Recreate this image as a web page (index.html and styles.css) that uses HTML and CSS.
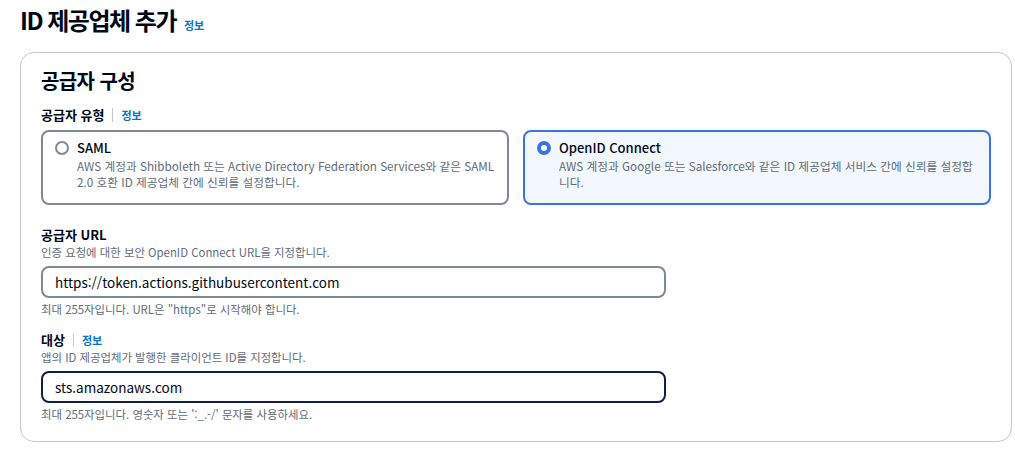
FILE: index.html
```html
<!DOCTYPE html>
<html lang="ko">
<head>
<meta charset="utf-8">
<link rel="stylesheet" href="styles.css">
</head>
<body>
<div class="page">
  <header class="page-header">
    <h1 class="page-title">ID 제공업체 추가</h1>
    <a class="info-link info-link--title">정보</a>
  </header>

  <section class="container">
    <h2 class="container-title">공급자 구성</h2>

    <div class="field">
      <div class="field-label-row">
        <span class="field-label">공급자 유형</span>
        <span class="divider"></span>
        <a class="info-link">정보</a>
      </div>
      <div class="tiles">
        <div class="tile">
          <span class="radio"></span>
          <div class="tile-text">
            <div class="tile-title">SAML</div>
            <div class="tile-desc">AWS 계정과 Shibboleth 또는 Active Directory Federation Services와 같은 SAML 2.0 호환 ID 제공업체 간에 신뢰를 설정합니다.</div>
          </div>
        </div>
        <div class="tile tile--selected">
          <span class="radio radio--checked"></span>
          <div class="tile-text">
            <div class="tile-title">OpenID Connect</div>
            <div class="tile-desc">AWS 계정과 Google 또는 Salesforce와 같은 ID 제공업체 서비스 간에 신뢰를 설정합니다.</div>
          </div>
        </div>
      </div>
    </div>

    <div class="field field--input">
      <div class="field-label-row">
        <span class="field-label">공급자 URL</span>
      </div>
      <div class="field-desc">인증 요청에 대한 보안 OpenID Connect URL을 지정합니다.</div>
      <div class="input">https://token.actions.githubusercontent.com</div>
      <div class="field-hint">최대 255자입니다. URL은 "https"로 시작해야 합니다.</div>
    </div>

    <div class="field field--input field--last">
      <div class="field-label-row">
        <span class="field-label">대상</span>
        <span class="divider"></span>
        <a class="info-link">정보</a>
      </div>
      <div class="field-desc">앱의 ID 제공업체가 발행한 클라이언트 ID를 지정합니다.</div>
      <div class="input input--focused">sts.amazonaws.com</div>
      <div class="field-hint">최대 255자입니다. 영숫자 또는 ':_.-/' 문자를 사용하세요.</div>
    </div>
  </section>
</div>
</body>
</html>
```

FILE: styles.css
```css
* { box-sizing: border-box; }
html, body {
  margin: 0;
  padding: 0;
  background: #ffffff;
}
body {
  font-family: "Noto Sans CJK KR", "Noto Sans", sans-serif;
  color: #000716;
}
.page {
  padding: 0 4px 0 20px;
}
.page-header {
  display: flex;
  align-items: baseline;
  gap: 8px;
  height: 52px;
  padding-top: 4px;
}
.page-title {
  margin: 0;
  font-size: 24px;
  line-height: 32px;
  font-weight: 700;
  letter-spacing: -1.5px;
}
.info-link {
  color: #0972d3;
  font-size: 11px;
  font-weight: 700;
  text-decoration: none;
}
.container {
  border: 1px solid #c6c6cd;
  border-radius: 14px;
  padding: 14px 20px 19px 20px;
  width: 992px;
}
.container-title {
  margin: 0;
  font-size: 20px;
  line-height: 28px;
  font-weight: 700;
  letter-spacing: -0.6px;
}
.field { margin-top: 11px; }
.field--input { margin-top: 21px; }
.field--last { margin-top: 14px; }
.field-label-row {
  display: flex;
  align-items: center;
  height: 18px;
}
.field-label {
  font-size: 13px;
  font-weight: 700;
  line-height: 18px;
}
.divider {
  width: 1px;
  height: 14px;
  background: #c6c6cd;
  margin: 0 8px;
}
.tiles {
  display: grid;
  grid-template-columns: 1fr 1fr;
  gap: 14px;
  margin-top: 6px;
  width: 950px;
}
.tile {
  display: flex;
  align-items: flex-start;
  gap: 8px;
  border: 2px solid #7d8998;
  border-radius: 8px;
  padding: 6px 12px 12px 12px;
  height: 75px;
}
.tile--selected {
  border-color: #3b74e0;
  background: #f2f8fd;
}
.radio {
  flex: none;
  width: 14px;
  height: 14px;
  border: 2px solid #7d8998;
  border-radius: 50%;
  margin-top: 3px;
  background: #fff;
}
.radio--checked {
  border: 4px solid #3b74e0;
  background: #fff;
}
.tile-title {
  font-size: 13px;
  line-height: 20px;
  font-weight: 500;
}
.tile-desc {
  font-size: 11.7px;
  line-height: 16px;
  color: #5f6b7a;
}
.field-desc {
  font-size: 11.4px;
  line-height: 16px;
  color: #5f6b7a;
}
.input {
  margin-top: 6px;
  width: 625px;
  height: 32px;
  border: 2px solid #7d8998;
  border-radius: 8px;
  padding: 0 12px;
  font-size: 13.5px;
  line-height: 28px;
  color: #000716;
}
.input--focused {
  border-color: #0f1f4a;
}
.field-hint {
  margin-top: 3px;
  font-size: 11.4px;
  line-height: 16px;
  color: #5f6b7a;
}
```
